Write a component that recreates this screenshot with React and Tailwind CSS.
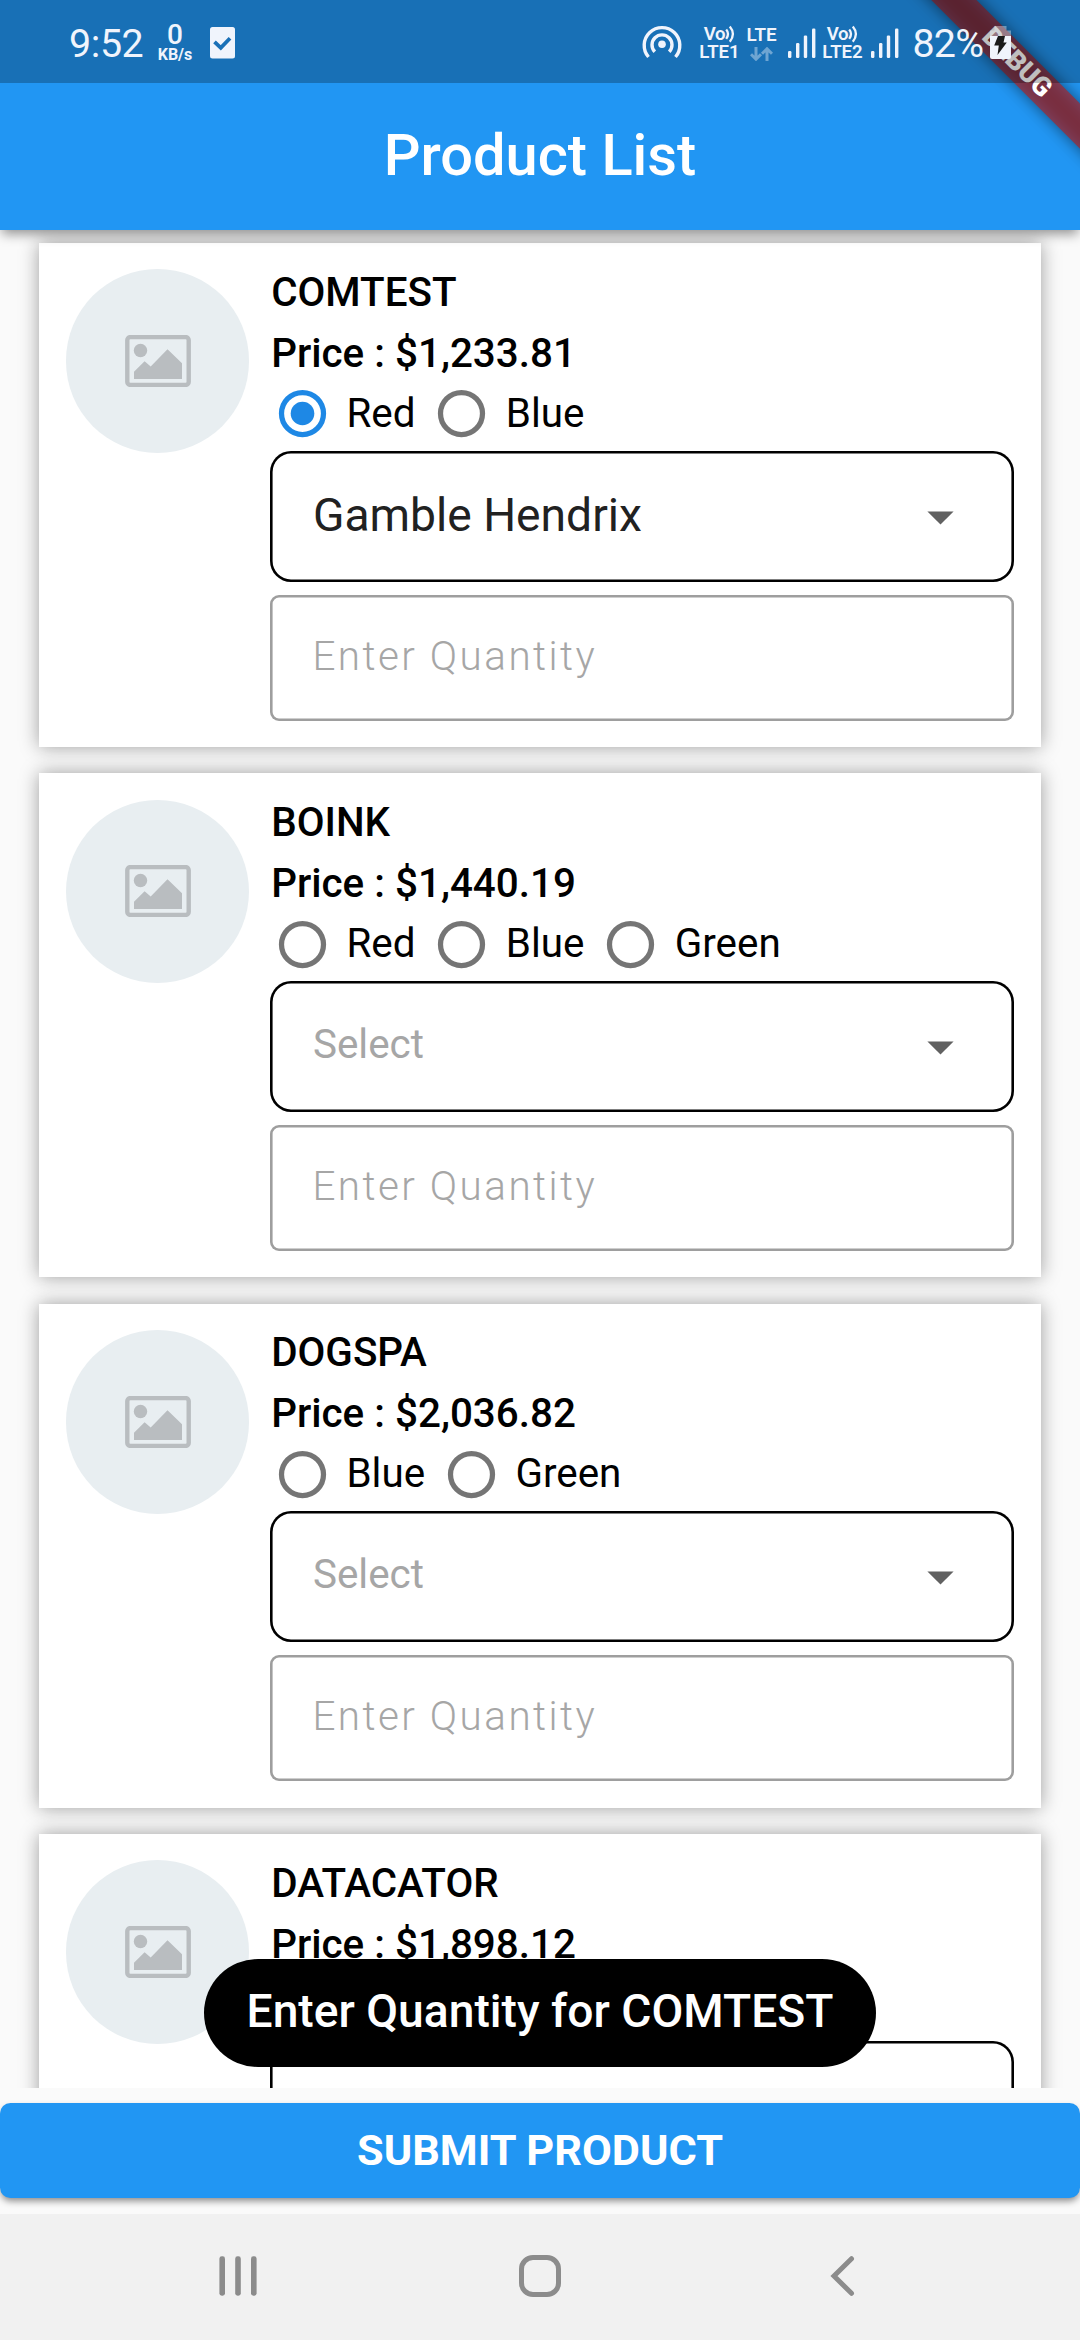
const products = [
  { name: 'COMTEST', price: '$1,233.81', colors: ['Red', 'Blue'], selected: 'Red', vendor: 'Gamble Hendrix' },
  { name: 'BOINK', price: '$1,440.19', colors: ['Red', 'Blue', 'Green'] },
  { name: 'DOGSPA', price: '$2,036.82', colors: ['Blue', 'Green'] },
  { name: 'DATACATOR', price: '$1,898.12', colors: ['Red', 'Green'] },
];

function Signal() {
  return (
    <svg width="28" height="30" viewBox="0 0 28 30" fill="currentColor" className="block">
      <rect x="0" y="23" width="3.4" height="7" rx="1.2" />
      <rect x="8" y="15" width="3.4" height="15" rx="1.2" />
      <rect x="15.8" y="7.5" width="3.4" height="22.5" rx="1.2" />
      <rect x="24" y="0.5" width="3.4" height="29.5" rx="1.2" />
    </svg>
  );
}

function VoLte({ label }) {
  return (
    <div className="flex flex-col items-center text-[18.6px] font-semibold leading-[18px]">
      <div className="flex h-[18px] items-center">
        <span className="tracking-[-0.3px]">Vo</span>
        <svg width="10" height="18" viewBox="0 0 10 18" fill="none" stroke="currentColor" strokeWidth="2.3" className="block">
          <path d="M1.2 4.6q3.6 4.2 0 9.2M4.8 1.4q6.2 7.4 0 15.4" />
        </svg>
      </div>
      <span>{label}</span>
    </div>
  );
}

function StatusBar() {
  return (
    <div className="relative z-20 flex h-[83px] items-start bg-black/25 text-[#f0f4fc]">
      <span className="ml-[69px] mt-[21px] w-[86px] text-[39.4px] leading-[46px] tracking-[-0.4px]">9:52</span>
      <div className="mt-[20px] flex w-[40px] flex-col items-center">
        <span className="text-[28px] font-medium leading-[29px]">0</span>
        <span className="text-[16px] font-bold leading-[11px]">KB/s</span>
      </div>
      <svg width="25" height="32" viewBox="0 0 25 32" className="ml-[15px] mt-[26.5px] block">
        <rect width="25" height="31.5" rx="2.5" fill="#f0f4fc" />
        <path d="M4.5 14.8l6.3 6L20 11.3" fill="none" stroke="#1a70b7" strokeWidth="3.8" />
      </svg>
      <svg width="40" height="34" viewBox="0 0 40 34" fill="none" stroke="currentColor" strokeWidth="3.4" className="ml-[406.5px] mt-[25px] block">
        <path d="M6.5 32A17.8 17.8 0 1 1 33.5 32" />
        <path d="M12.8 26.8A10 10 0 1 1 27.2 26.8" />
        <circle cx="20" cy="19.3" r="3.8" fill="currentColor" stroke="none" />
      </svg>
      <div className="ml-[17px] mt-[25px] w-[42px]"><VoLte label="LTE1" /></div>
      <div className="ml-[4px] mt-[26px] flex w-[34px] flex-col items-center">
        <span className="text-[18.8px] font-semibold leading-[18px]">LTE</span>
        <svg width="23" height="14" viewBox="0 0 23 14" fill="none" stroke="currentColor" strokeWidth="3" className="mt-[2.5px] block opacity-40">
          <path d="M6 0v12M1 7.2l5 5 5-5M17 14V2M12 6.8l5-5 5 5" />
        </svg>
      </div>
      <div className="ml-[9px] mt-[28px]"><Signal /></div>
      <div className="ml-[6px] mt-[25px] w-[42px]"><VoLte label="LTE2" /></div>
      <div className="ml-[7px] mt-[28px]"><Signal /></div>
      <span className="ml-[14px] mt-[21px] w-[77px] text-[39.4px] leading-[46px] tracking-[-0.8px]">82%</span>
      <svg width="21" height="33" viewBox="0 0 21 33" className="mt-[26px] block">
        <path d="M4.5 0h12v4.5H21V10H0V4.5h4.5z" fill="#f0f4fc" opacity="0.4" />
        <path d="M0 10h21v21a2 2 0 0 1-2 2H2a2 2 0 0 1-2-2z" fill="#f0f4fc" />
        <path d="M8 10h7l-1.5 6.5h3.3L7.5 29l1.3-9.5H4.2z" fill="#1a1a1a" />
      </svg>
    </div>
  );
}

function DebugBanner() {
  return (
    <div className="pointer-events-none absolute right-0 top-0 z-10 h-[230px] w-[230px] overflow-hidden">
      <div className="absolute left-[-33px] top-[47px] h-[31.5px] w-[400px] rotate-45 bg-black/50 blur-[8px]" />
      <div className="absolute left-[-33px] top-[47px] flex h-[31.5px] w-[400px] rotate-45 items-center justify-center bg-[#b71c1c]/[0.627]">
        <span className="text-[26.8px] font-black leading-[31.5px] text-white">DEBUG</span>
      </div>
    </div>
  );
}

function Radio({ label, checked }) {
  return (
    <div className="flex items-center">
      <svg width="63" height="63" viewBox="0 0 24 24" fill="none" className={checked ? 'block text-[#1e88e5]' : 'block text-[#757575]'}>
        <circle cx="12" cy="12" r="8" stroke="currentColor" strokeWidth="2" />
        {checked && <circle cx="12" cy="12" r="4.5" fill="currentColor" />}
      </svg>
      <span className="mb-[1px] ml-[12.4px] mr-[14.9px] text-[40.4px] leading-[47.4px] text-black">{label}</span>
    </div>
  );
}

function Placeholder() {
  return (
    <div className="flex h-[183.75px] w-[183.75px] shrink-0 items-center justify-center rounded-full bg-[#e8eef1]">
      <svg width="66" height="52" viewBox="0 0 66 52" fill="#b9bdc0" className="block">
        <rect x="2.3" y="2.1" width="61.4" height="47.8" rx="3" fill="none" stroke="#b9bdc0" strokeWidth="4.4" />
        <circle cx="15.5" cy="15.5" r="6.7" />
        <path d="M9 44V36.7L19.6 26.3l6.1 5.3L42.5 14.3 57 28.3V44z" />
      </svg>
    </div>
  );
}

function ProductCard({ product }) {
  return (
    <div className="flex h-[504px] shrink-0 gap-[21px] bg-white p-[26.25px] shadow-[0_0_17.8px_#9e9e9e]">
      <Placeholder />
      <div className="flex min-w-0 flex-1 flex-col">
        <div className="-mt-[0.6px] pl-[0.8px] text-[40.4px] font-medium leading-[47.4px] text-black">{product.name}</div>
        <div className="mt-[13.7px] pl-[0.8px] text-[40.4px] font-medium leading-[47.4px] text-black">Price : {product.price}</div>
        <div className="flex h-[73.3px] items-center pl-[0.7px]">
          {product.colors.map((c) => (
            <Radio key={c} label={c} checked={product.selected === c} />
          ))}
        </div>
        <div className="flex h-[131.25px] shrink-0 items-center justify-between rounded-[21px] pl-[42.6px] pr-[60px] shadow-[inset_0_0_0_2.6px_#000]">
          {product.vendor ? (
            <span className="mb-[2.4px] text-[46.2px] leading-[54px] text-[#212121]">{product.vendor}</span>
          ) : (
            <span className="mb-[2.4px] text-[40.4px] leading-[48px] text-[#a6a6a6]">Select</span>
          )}
          <svg width="27" height="14" viewBox="0 0 27 14" className="mt-[3px] block"><path d="M0.4 0.4h26.2L13.5 13.5z" fill="#616161" /></svg>
        </div>
        <div className="mt-[13.1px] flex h-[125.9px] shrink-0 items-center rounded-[9px] pl-[42px] shadow-[inset_0_0_0_2.6px_#9e9e9e]">
          <span className="mb-[2.4px] text-[40.4px] font-light leading-[47.4px] tracking-[2.48px] text-[#a6a6a6]">Enter Quantity</span>
        </div>
      </div>
    </div>
  );
}

function NavBar() {
  return (
    <div className="flex h-[126px] items-center justify-between bg-[#f1f1f1] px-[217px] pb-[2px] text-[#8c8c8c]">
      <svg width="42" height="42" viewBox="0 0 42 42" fill="currentColor" className="block">
        <rect x="2.4" y="1.3" width="5.6" height="39.4" rx="2.4" />
        <rect x="18.2" y="1.3" width="5.6" height="39.4" rx="2.4" />
        <rect x="34" y="1.3" width="5.6" height="39.4" rx="2.4" />
      </svg>
      <svg width="42" height="42" viewBox="0 0 42 42" fill="none" stroke="currentColor" strokeWidth="5" className="block">
        <rect x="2.5" y="2.5" width="37" height="37" rx="11.5" />
      </svg>
      <svg width="42" height="42" viewBox="0 0 42 42" fill="none" stroke="currentColor" strokeWidth="5" strokeLinecap="round" className="block">
        <path d="M30.5 3.7L13 21l17.5 17.3" />
      </svg>
    </div>
  );
}

export default function App() {
  return (
    <div className="relative flex h-[2340px] w-[1080px] flex-col overflow-hidden bg-[#fafafa] font-['Roboto',sans-serif]">
      <header className="relative z-10 h-[230px] shrink-0 bg-[#2196f3] shadow-[0_6px_11px_-2px_rgba(0,0,0,0.42)]">
        <StatusBar />
        <h1 className="flex h-[147px] items-center justify-center pb-[3px] text-[57.75px] font-medium leading-[68px] text-white">Product List</h1>
        <DebugBanner />
      </header>

      <main className="flex h-[1857.7px] shrink-0 flex-col gap-[26.25px] overflow-hidden px-[39.375px] pt-[13.1px]">
        {products.map((p) => (
          <ProductCard key={p.name} product={p} />
        ))}
      </main>

      <footer className="shrink-0 pb-[16px] pt-[15.7px]">
        <button className="block h-[94.6px] w-full rounded-[10.5px] bg-[#2196f3] text-[43.3px] font-bold leading-[94px] text-white shadow-[0_4px_7px_-1px_rgba(0,0,0,0.45)]">SUBMIT PRODUCT</button>
      </footer>
      <NavBar />

      <div className="absolute left-[204px] top-[1959px] z-30 flex h-[107.5px] w-[672px] items-center justify-center rounded-full bg-black pb-[3.4px] text-[46.2px] font-medium leading-[54px] text-white">
        Enter Quantity for COMTEST
      </div>
    </div>
  );
}
